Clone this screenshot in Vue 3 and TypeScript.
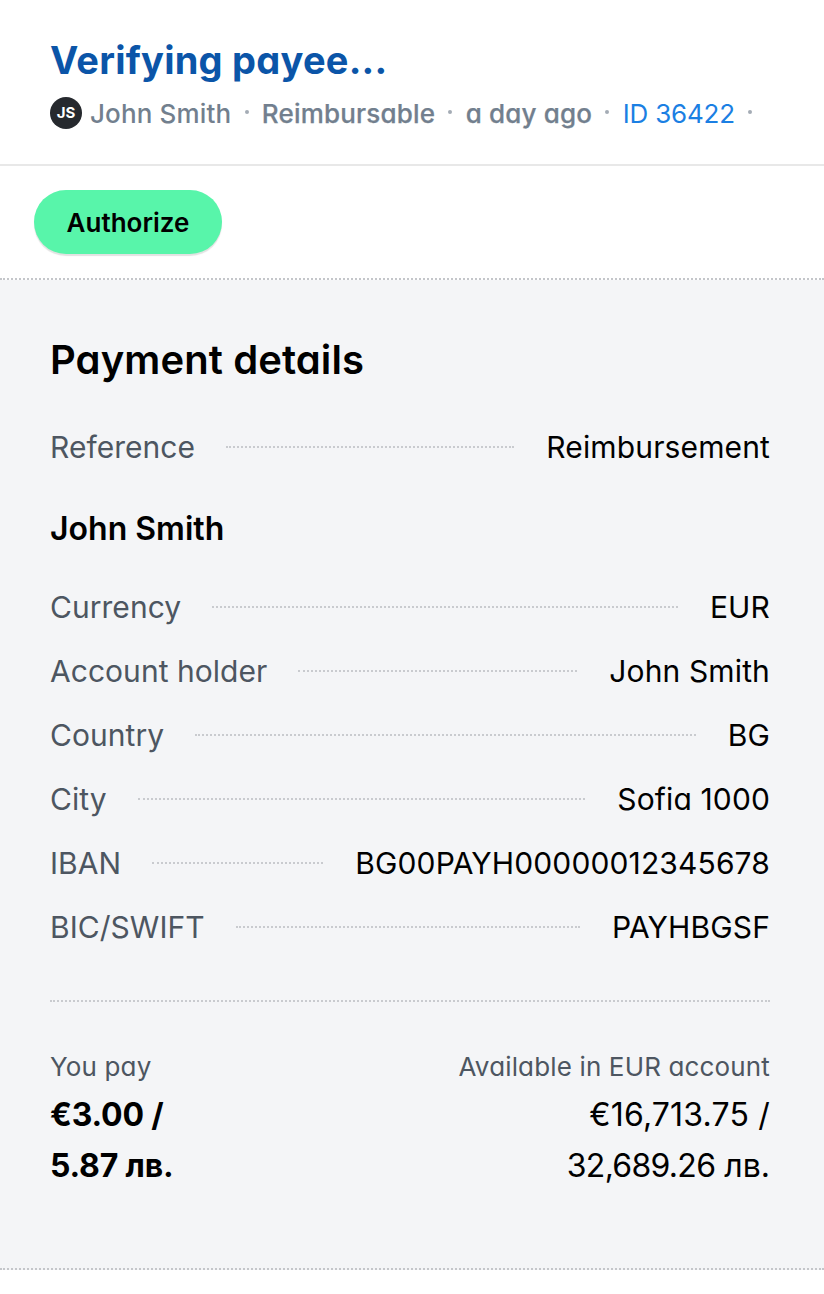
<script setup lang="ts">
const account = [
  { label: 'Currency', value: 'EUR' },
  { label: 'Account holder', value: 'John Smith' },
  { label: 'Country', value: 'BG' },
  { label: 'City', value: 'Sofia 1000' },
  { label: 'IBAN', value: 'BG00PAYH00000012345678' },
  { label: 'BIC/SWIFT', value: 'PAYHBGSF' },
]
</script>

<template>
  <div class="page">
    <header class="head">
      <h1 class="title">Verifying payee...</h1>
      <div class="meta">
        <span class="avatar">JS</span>
        <span class="meta-name">John Smith</span>
        <span class="sep"></span>
        <span class="meta-item">Reimbursable</span>
        <span class="sep"></span>
        <span class="meta-item">a day ago</span>
        <span class="sep"></span>
        <span class="meta-link">ID 36422</span>
        <span class="sep"></span>
      </div>
    </header>
    <div class="actions">
      <button class="authorize" type="button">Authorize</button>
    </div>
    <section class="panel">
      <h2 class="panel-title">Payment details</h2>
      <div class="row">
        <span class="label">Reference</span>
        <span class="leader"></span>
        <span class="value">Reimbursement</span>
      </div>
      <h3 class="payee">John Smith</h3>
      <div class="rows">
        <div v-for="item in account" :key="item.label" class="row">
          <span class="label">{{ item.label }}</span>
          <span class="leader"></span>
          <span class="value">{{ item.value }}</span>
        </div>
      </div>
      <div class="totals">
        <div class="total">
          <div class="total-label">You pay</div>
          <div class="total-amount strong">€3.00 /<br />5.87 лв.</div>
        </div>
        <div class="total right">
          <div class="total-label">Available in EUR account</div>
          <div class="total-amount"><span class="wide">€16,713.75 /</span><br /><span class="tight">32,689.26</span> лв.</div>
        </div>
      </div>
    </section>
  </div>
</template>

<style>
html, body { margin: 0; background: #fff; }
</style>

<style scoped>
.page {
  width: 824px;
  height: 1294px;
  font-family: Inter, "Liberation Sans", sans-serif;
  font-feature-settings: "cv11", "calt" 0;
  color: #000;
  background: #fff;
  overflow: hidden;
}
.head {
  box-sizing: border-box;
  height: 166px;
  padding: 36px 50px 0;
  border-bottom: 2px solid #e8e8e8;
}
.title {
  margin: 0;
  font-size: 38px;
  line-height: 48px;
  font-weight: 700;
  letter-spacing: 0.24px;
  color: #0b55a8;
}
.meta {
  display: flex;
  align-items: center;
  height: 32px;
  margin-top: 13px;
  font-size: 26px;
  white-space: nowrap;
  color: #727f8e;
}
.avatar {
  flex: none;
  width: 32px;
  height: 32px;
  margin-right: 8px;
  border-radius: 50%;
  background: #26292e;
  color: #fff;
  font-size: 15px;
  font-weight: 700;
  line-height: 32px;
  text-align: center;
}
.meta-name { font-weight: 500; letter-spacing: 0.15px; }
.meta-item { font-weight: 500; letter-spacing: 0.18px; -webkit-text-stroke: 0.25px #727f8e; }
.meta-link { letter-spacing: -0.2px; color: #1b7fe3; }
.sep {
  flex: none;
  width: 4px;
  height: 4px;
  margin: -2px 13.25px 0;
  border-radius: 50%;
  background: #a4acb5;
}
.actions {
  box-sizing: border-box;
  height: 114px;
  padding: 24px 34px 0;
  border-bottom: 2px dotted #c4c6ca;
}
.authorize {
  display: block;
  width: 188px;
  height: 64px;
  padding: 0;
  border: 0;
  border-radius: 32px;
  background: #58f5aa;
  box-shadow: 0 2px 1px #e2e2e2;
  color: #000;
  font-family: inherit;
  font-feature-settings: inherit;
  font-size: 26px;
  font-weight: 600;
}
.panel {
  box-sizing: border-box;
  height: 990px;
  padding: 56px 54px 0 50px;
  background: #f4f5f7;
  border-bottom: 2px dotted #c4c6ca;
}
.panel-title {
  margin: 0 0 31px;
  font-size: 40px;
  line-height: 48px;
  font-weight: 600;
  letter-spacing: 0.1px;
}
.row {
  display: flex;
  align-items: center;
  height: 64px;
  font-size: 30px;
}
.label { color: #4d5661; letter-spacing: 0.04px; }
.leader {
  flex: 1;
  margin: 0 32px 0 31px;
  border-top: 2px dotted #c9cbcf;
}
.value { color: #000; letter-spacing: 0.13px; }
.payee {
  margin: 0;
  padding: 26px 0 22px;
  font-size: 32px;
  line-height: 48px;
  font-weight: 600;
}
.totals {
  display: flex;
  justify-content: space-between;
  margin-top: 41px;
  padding-top: 47px;
  border-top: 2px dotted #c9cbcf;
}
.total-label {
  font-size: 26px;
  line-height: 36px;
  letter-spacing: 0.15px;
  color: #4d5661;
}
.total-amount {
  margin-top: 4px;
  font-size: 32px;
  line-height: 51px;
}
.strong { font-weight: 700; letter-spacing: -0.2px; }
.right { text-align: right; }
.wide { letter-spacing: 0.18px; }
.tight { letter-spacing: -0.72px; }
</style>
